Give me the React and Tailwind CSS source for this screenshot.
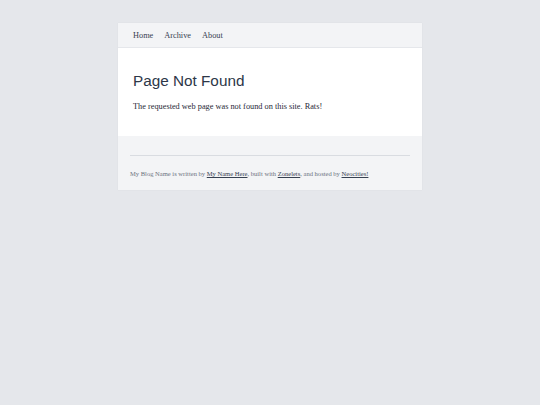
export default function App() {
  return (
    <div className="min-h-[405px] w-full bg-[#e5e7eb] pt-[23px]" style={{ fontFamily: '"Liberation Serif", serif' }}>
      <div className="mx-auto w-[304px] shadow-[0_0_1px_rgba(0,0,0,0.08)]">
        <nav className="flex h-[25px] items-center gap-[11px] border-b border-[#e5e7eb] bg-[#f3f4f6] px-[15px] pt-[3px] text-[8.3px] text-[#374151]">
          <a>Home</a>
          <a>Archive</a>
          <a>About</a>
        </nav>
        <main className="bg-white px-[15px] pt-[24px] pb-[23px]">
          <h1 className="text-[15.3px] leading-[18px] text-[#2d3748]" style={{ fontFamily: '"Liberation Sans", Arial, sans-serif' }}>
            Page Not Found
          </h1>
          <p className="mt-[11px] text-[8.3px] leading-[12px] text-[#1f2937]">
            The requested web page was not found on this site. Rats!
          </p>
        </main>
        <footer className="bg-[#f3f4f6] px-[12px] pt-[19px] pb-[11px]">
          <hr className="border-0 border-t border-[#d9dce1]" />
          <p className="mt-[13px] text-[6.55px] leading-[10px] text-[#6b7280]">
            My Blog Name is written by <a className="text-[#374151] underline">My Name Here</a>, built with{" "}
            <a className="text-[#374151] underline">Zonelets</a>, and hosted by{" "}
            <a className="text-[#374151] underline">Neocities!</a>
          </p>
        </footer>
      </div>
    </div>
  );
}
